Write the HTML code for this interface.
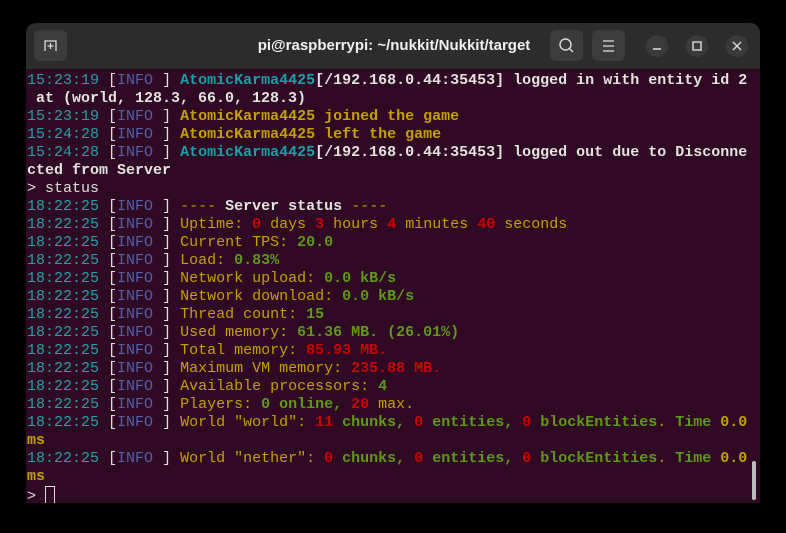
<!DOCTYPE html>
<html><head><style>
body{margin:0;width:786px;height:533px;background:#000;overflow:hidden;font-family:"Liberation Sans",sans-serif}
.win{position:absolute;left:26px;top:23px;width:734px;height:480px;background:#300a24;border-radius:10px 10px 0 0;overflow:hidden}
.tb{position:absolute;left:0;top:0;width:734px;height:46px;background:#2c2c2c}
.title{position:absolute;left:0;width:734px;top:0;line-height:46px;text-align:center;color:#f0f0f0;font-weight:bold;font-size:15px;text-indent:2px}
.btn{position:absolute;top:7px;width:33px;height:31px;background:#3c3c3c;border-radius:6px}
.cb{position:absolute;top:12px;width:22px;height:22px;background:#3a3a3a;border-radius:50%}
.term{position:absolute;left:1px;top:49px;font-family:"Liberation Mono",monospace;font-size:15px;line-height:18px;white-space:pre;color:#d3d7cf}
.t{color:#2a9fa8}.i{color:#5560a8}.w{color:#e0ddd8}.c{color:#1aa0a8;font-weight:bold}.y{color:#c4a000}.yb{color:#c4a000;font-weight:bold}.g{color:#5e9a16;font-weight:bold}.r{color:#cc0000;font-weight:bold}.b{font-weight:bold;color:#e4e2df}
</style></head><body>
<div class="win">
<div class="tb">
<div class="btn" style="left:8px"><svg width="33" height="31"><path d="M11 21V11h11v10M16.5 13v6M13.5 16h6" stroke="#ddd" stroke-width="1.3" fill="none"/></svg></div>
<div class="title">pi@raspberrypi: ~/nukkit/Nukkit/target</div>
<div class="btn" style="left:524px"><svg width="33" height="31"><circle cx="15.5" cy="14.5" r="5.5" stroke="#ddd" stroke-width="1.4" fill="none"/><path d="M19.5 18.5l3.5 3.5" stroke="#ddd" stroke-width="1.4"/></svg></div>
<div class="btn" style="left:566px"><svg width="33" height="31"><path d="M11 11h11M11 16h11M11 21h11" stroke="#ddd" stroke-width="1.3"/></svg></div>
<div class="cb" style="left:620px"><svg width="22" height="22"><path d="M7 14h8" stroke="#ddd" stroke-width="1.4"/></svg></div>
<div class="cb" style="left:660px"><svg width="22" height="22"><rect x="7" y="7" width="8" height="8" stroke="#ddd" stroke-width="1.4" fill="none"/></svg></div>
<div class="cb" style="left:700px"><svg width="22" height="22"><path d="M7 7l8 8M15 7l-8 8" stroke="#ddd" stroke-width="1.4"/></svg></div>
</div>
<div class="term"><span class="t">15:23:19</span> <span class="w">[</span><span class="i">INFO</span> <span class="w">]</span> <span class="c">AtomicKarma4425</span><span class="b">[/192.168.0.44:35453] logged in with entity id 2</span>
<span class="b"> at (world, 128.3, 66.0, 128.3)</span>
<span class="t">15:23:19</span> <span class="w">[</span><span class="i">INFO</span> <span class="w">]</span> <span class="yb">AtomicKarma4425 joined the game</span>
<span class="t">15:24:28</span> <span class="w">[</span><span class="i">INFO</span> <span class="w">]</span> <span class="yb">AtomicKarma4425 left the game</span>
<span class="t">15:24:28</span> <span class="w">[</span><span class="i">INFO</span> <span class="w">]</span> <span class="c">AtomicKarma4425</span><span class="b">[/192.168.0.44:35453] logged out due to Disconne</span>
<span class="b">cted from Server</span>
<span class="w">&gt; status</span>
<span class="t">18:22:25</span> <span class="w">[</span><span class="i">INFO</span> <span class="w">]</span> <span class="y">----</span> <span class="b">Server status</span> <span class="y">----</span>
<span class="t">18:22:25</span> <span class="w">[</span><span class="i">INFO</span> <span class="w">]</span> <span class="y">Uptime: </span><span class="r">0</span><span class="y"> days </span><span class="r">3</span><span class="y"> hours </span><span class="r">4</span><span class="y"> minutes </span><span class="r">40</span><span class="y"> seconds</span>
<span class="t">18:22:25</span> <span class="w">[</span><span class="i">INFO</span> <span class="w">]</span> <span class="y">Current TPS: </span><span class="g">20.0</span>
<span class="t">18:22:25</span> <span class="w">[</span><span class="i">INFO</span> <span class="w">]</span> <span class="y">Load: </span><span class="g">0.83%</span>
<span class="t">18:22:25</span> <span class="w">[</span><span class="i">INFO</span> <span class="w">]</span> <span class="y">Network upload: </span><span class="g">0.0 kB/s</span>
<span class="t">18:22:25</span> <span class="w">[</span><span class="i">INFO</span> <span class="w">]</span> <span class="y">Network download: </span><span class="g">0.0 kB/s</span>
<span class="t">18:22:25</span> <span class="w">[</span><span class="i">INFO</span> <span class="w">]</span> <span class="y">Thread count: </span><span class="g">15</span>
<span class="t">18:22:25</span> <span class="w">[</span><span class="i">INFO</span> <span class="w">]</span> <span class="y">Used memory: </span><span class="g">61.36 MB. (26.01%)</span>
<span class="t">18:22:25</span> <span class="w">[</span><span class="i">INFO</span> <span class="w">]</span> <span class="y">Total memory: </span><span class="r">85.93 MB.</span>
<span class="t">18:22:25</span> <span class="w">[</span><span class="i">INFO</span> <span class="w">]</span> <span class="y">Maximum VM memory: </span><span class="r">235.88 MB.</span>
<span class="t">18:22:25</span> <span class="w">[</span><span class="i">INFO</span> <span class="w">]</span> <span class="y">Available processors: </span><span class="g">4</span>
<span class="t">18:22:25</span> <span class="w">[</span><span class="i">INFO</span> <span class="w">]</span> <span class="y">Players: </span><span class="g">0 online, </span><span class="r">20</span><span class="y"> max.</span>
<span class="t">18:22:25</span> <span class="w">[</span><span class="i">INFO</span> <span class="w">]</span> <span class="y">World "world": </span><span class="r">11</span><span class="g"> chunks, </span><span class="r">0</span><span class="g"> entities, </span><span class="r">0</span><span class="g"> blockEntities</span><span class="y">. </span><span class="g">Time </span><span class="yb">0.0</span>
<span class="yb">ms</span>
<span class="t">18:22:25</span> <span class="w">[</span><span class="i">INFO</span> <span class="w">]</span> <span class="y">World "nether": </span><span class="r">0</span><span class="g"> chunks, </span><span class="r">0</span><span class="g"> entities, </span><span class="r">0</span><span class="g"> blockEntities</span><span class="y">. </span><span class="g">Time </span><span class="yb">0.0</span>
<span class="yb">ms</span>
<span class="w">&gt; <span style="display:inline-block;width:8px;height:16px;border:1px solid #ddd;vertical-align:-4px"></span></span></div>
<div style="position:absolute;left:726px;top:438px;width:4px;height:39px;background:#bbb;border-radius:2px"></div>
</div>
</body></html>
